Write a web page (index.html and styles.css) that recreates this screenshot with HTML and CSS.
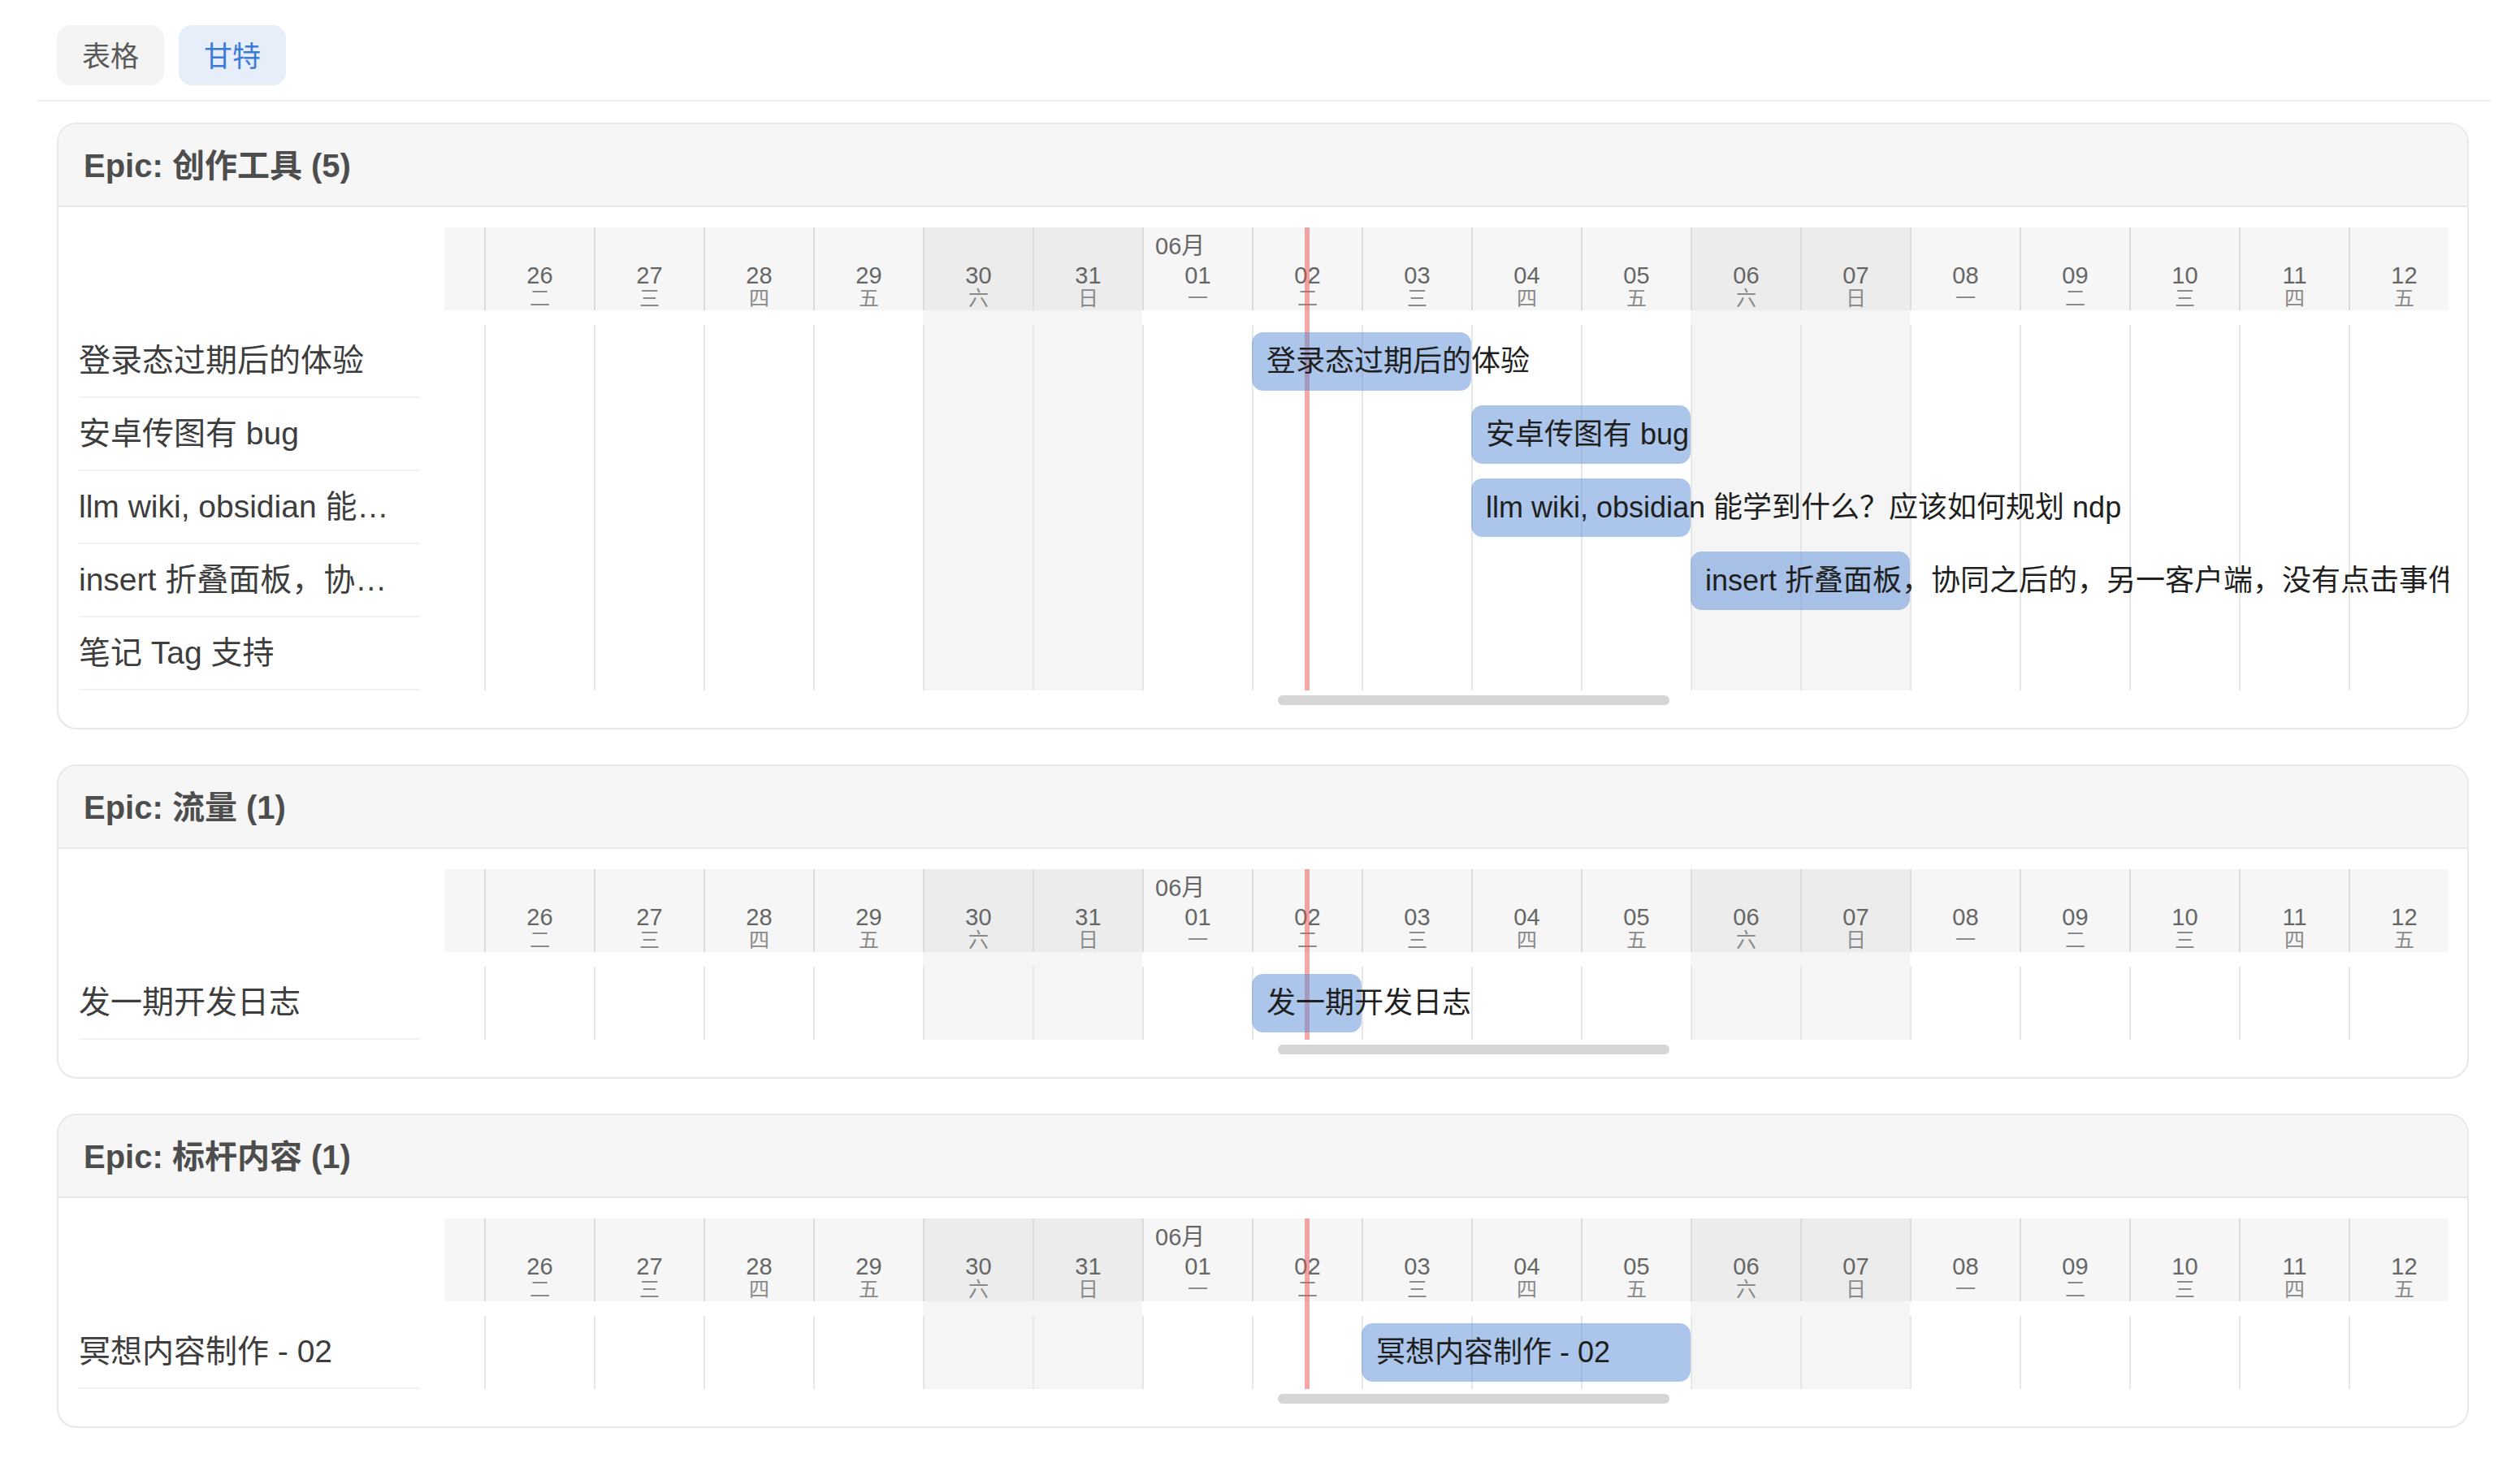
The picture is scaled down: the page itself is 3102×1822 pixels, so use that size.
FILE: index.html
```html
<!DOCTYPE html>
<html lang="zh-CN">
  <head>
    <meta charset="utf-8" />
    <title>需求看板 - 甘特</title>
    <link rel="stylesheet" href="styles.css" />
  </head>
  <body>
    <div class="page">
      <div class="view-tabs">
        <button class="tab">表格</button>
        <button class="tab active">甘特</button>
      </div>
      <div class="epics" id="epics"></div>
    </div>

    <script>
      const WEEK = "日一二三四五六";
      const start = new Date(2026, 4, 25);
      const today = new Date(2026, 5, 2);
      const DAY_COUNT = 19;

      // start = day index from the first visible day, len = number of days
      const epics = [
        {
          name: "创作工具",
          tasks: [
            { title: "登录态过期后的体验", start: 8, len: 2 },
            { title: "安卓传图有 bug", start: 10, len: 2 },
            { title: "llm wiki, obsidian 能学到什么？应该如何规划 ndp", start: 10, len: 2 },
            { title: "insert 折叠面板，协同之后的，另一客户端，没有点击事件", start: 12, len: 2 },
            { title: "笔记 Tag 支持" },
          ],
        },
        {
          name: "流量",
          tasks: [{ title: "发一期开发日志", start: 8, len: 1 }],
        },
        {
          name: "标杆内容",
          tasks: [{ title: "冥想内容制作 - 02", start: 9, len: 3 }],
        },
      ];

      function pad(n) {
        return String(n).padStart(2, "0");
      }

      const days = [];
      for (let i = 0; i < DAY_COUNT; i++) {
        const d = new Date(start);
        d.setDate(start.getDate() + i);
        days.push({
          date: pad(d.getDate()),
          month: d.getDate() === 1 ? pad(d.getMonth() + 1) + "月" : "",
          week: WEEK[d.getDay()],
          weekend: d.getDay() === 0 || d.getDay() === 6,
          today: d.getTime() === today.getTime(),
        });
      }

      function flags(d) {
        return (d.weekend ? " weekend" : "") + (d.today ? " today" : "");
      }

      function renderEpic(epic) {
        const head = days
          .map(
            (d) => `<div class="day${flags(d)}">
              ${d.month ? `<span class="month">${d.month}</span>` : ""}
              <span class="day-num">${d.date}</span>
              <span class="day-week">${d.week}</span>
            </div>`
          )
          .join("");
        const cols = days
          .map((d, i) => `<div class="col${flags(d)}" style="grid-column: ${i + 1}"></div>`)
          .join("");
        const bars = epic.tasks
          .map((t, i) =>
            t.len
              ? `<div class="bar" style="grid-row: ${i + 2}; grid-column: ${t.start + 1} / span ${t.len}">${t.title}</div>`
              : ""
          )
          .join("");
        const names = epic.tasks.map((t) => `<div class="task-name">${t.title}</div>`).join("");

        return `<section class="epic">
          <div class="epic-head">Epic: ${epic.name} (${epic.tasks.length})</div>
          <div class="epic-body">
            <div class="task-list">${names}</div>
            <div class="timeline">
              <div class="track">
                <div class="day-row">${head}</div>
                <div class="grid" style="grid-template-rows: 18px repeat(${epic.tasks.length}, 90px)">${cols}${bars}</div>
              </div>
              <div class="scroll"><div class="thumb"></div></div>
            </div>
          </div>
        </section>`;
      }

      document.querySelector("#epics").innerHTML = epics.map(renderEpic).join("");
    </script>
  </body>
</html>
```

FILE: styles.css
```css
* {
  box-sizing: border-box;
}

body {
  margin: 0;
  font-family: "Liberation Sans", "Noto Sans CJK SC", sans-serif;
  color: #333;
  background-color: #fff;
}

.page {
  padding: 0 36px 0 46px;
}

/* view switch */
.view-tabs {
  display: flex;
  gap: 18px;
  padding: 31px 24px 18px;
  border-bottom: 2px solid #efefef;
}

.tab {
  height: 74px;
  padding: 0 31px 3px;
  border: none;
  border-radius: 16px;
  background-color: #f4f4f4;
  color: #595959;
  font-family: inherit;
  font-size: 35px;
  cursor: pointer;
}

.tab.active {
  background-color: #e6eef9;
  color: #3a7bd8;
}

/* epic cards */
.epics {
  display: flex;
  flex-direction: column;
  gap: 43px;
  padding: 26px 27px 40px 24px;
}

.epic {
  border: 2px solid #e8e8e8;
  border-radius: 24px;
  overflow: hidden;
}

.epic-head {
  height: 102px;
  display: flex;
  align-items: center;
  padding: 0 31px 4px;
  background-color: #f6f6f6;
  border-bottom: 2px solid #e8e8e8;
  font-size: 40px;
  font-weight: bold;
  color: #4d4d4d;
}

.epic-body {
  display: flex;
  gap: 30px;
  padding: 25px 23px 22px 25px;
}

.task-list {
  width: 420px;
  flex: none;
  padding-top: 120px;
}

.task-name {
  height: 90px;
  line-height: 88px;
  padding-right: 24px;
  border-bottom: 2px solid #f2f2f2;
  font-size: 39px;
  color: #3d3d3d;
  white-space: nowrap;
  overflow: hidden;
  text-overflow: ellipsis;
}

/* timeline */
.timeline {
  flex: 1;
  min-width: 0;
  overflow: hidden;
}

.track {
  width: 2565px;
  margin-left: -86px;
}

.day-row {
  display: flex;
}

.day {
  position: relative;
  width: 135px;
  height: 102px;
  flex: none;
  display: flex;
  flex-direction: column;
  align-items: center;
  justify-content: flex-end;
  padding-bottom: 2px;
  border-left: 2px solid #dcdcdc;
  background-color: #f6f6f6;
}

.day.weekend {
  background-color: #ececec;
}

.day.today::after {
  content: "";
  position: absolute;
  top: 0;
  bottom: 0;
  left: 63px;
  width: 6px;
  background-color: rgba(232, 80, 80, 0.5);
}

.month {
  align-self: flex-start;
  padding-left: 14px;
  margin-bottom: 6px;
  font-size: 29px;
  line-height: 30px;
  color: #666;
}

.day-num {
  font-size: 29px;
  line-height: 30px;
  color: #666;
}

.day-week {
  font-size: 25px;
  line-height: 26px;
  color: #8a8a8a;
}

.grid {
  display: grid;
  grid-template-columns: repeat(19, 135px);
}

.col {
  grid-row: 1 / -1;
  background: linear-gradient(#e6e6e6, #e6e6e6) 0 18px / 2px 100% no-repeat;
}

.col.weekend {
  background-color: #f5f5f5;
}

.col.today {
  background-image: linear-gradient(#e6e6e6, #e6e6e6),
    linear-gradient(rgba(232, 80, 80, 0.5), rgba(232, 80, 80, 0.5));
  background-size: 2px 100%, 6px 100%;
  background-position: 0 18px, 65px 0;
  background-repeat: no-repeat;
}

.bar {
  align-self: center;
  min-width: 0;
  height: 72px;
  padding: 0 18px;
  border-radius: 14px;
  background-color: rgba(88, 140, 216, 0.5);
  font-size: 36px;
  line-height: 72px;
  color: #1f1f1f;
  white-space: nowrap;
}

.scroll {
  height: 24px;
  padding-top: 6px;
}

.thumb {
  width: 482px;
  height: 12px;
  margin-left: 1026px;
  border-radius: 6px;
  background-color: #d5d5d5;
}
```
